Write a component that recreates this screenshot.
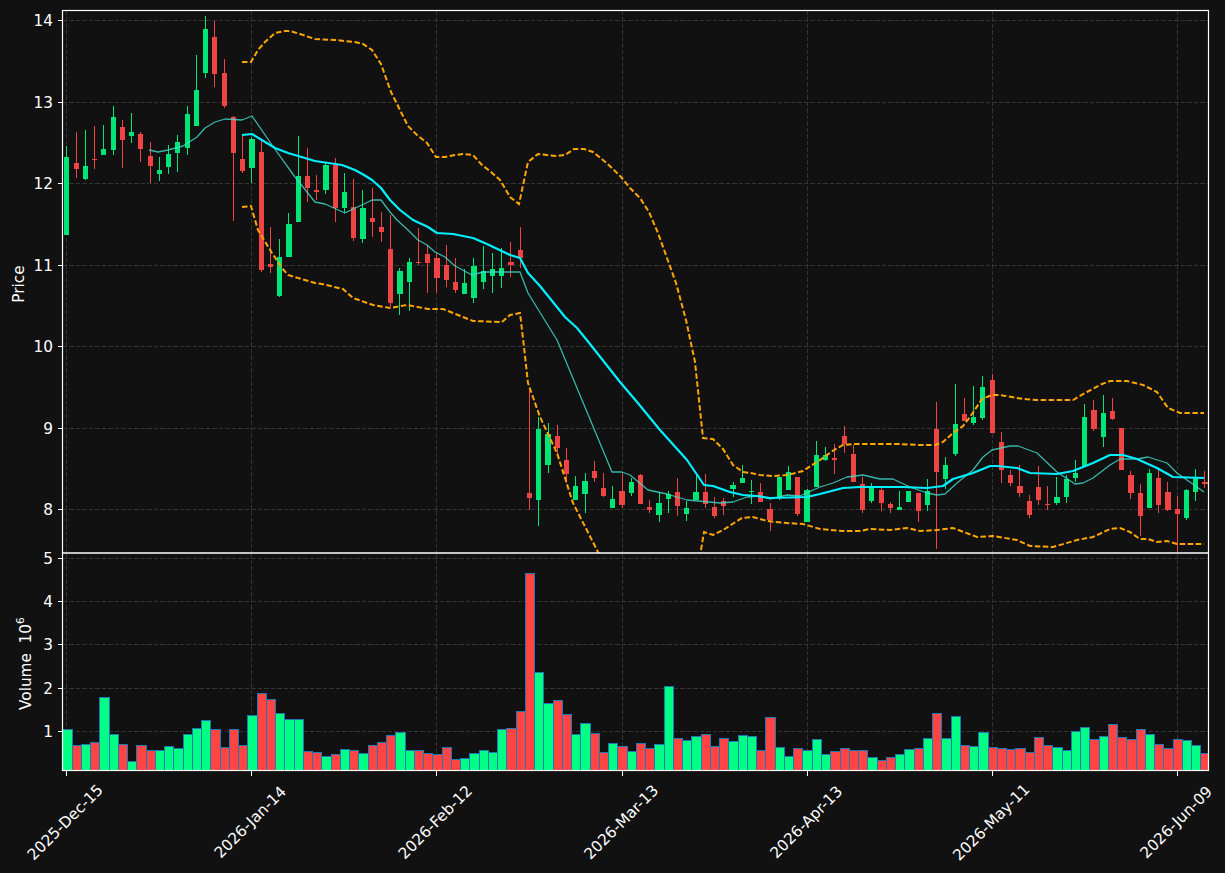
// OHLC chart, values are read off the screen in px
type Candle = [number, number, number, number, number]; // wick top, body top, body bottom, wick bottom, up

const candles: Candle[] = [
  [146, 157, 235, 235, 1], [132, 163, 169, 178, 0], [130, 166, 179, 180, 1], [126, 159, 160, 169, 0],
  [125, 149, 155, 155, 1], [106, 117, 150, 155, 1], [120, 127, 140, 168, 0], [113, 132, 136, 143, 1],
  [132, 134, 149, 162, 0], [142, 156, 166, 183, 0], [157, 170, 174, 181, 1], [145, 154, 167, 174, 1],
  [135, 142, 153, 172, 1], [106, 114, 148, 155, 1], [55, 90, 126, 126, 1], [16, 29, 73, 78, 1],
  [21, 37, 74, 87, 0], [59, 73, 106, 108, 0], [116, 117, 153, 221, 0], [135, 159, 171, 173, 0],
  [137, 139, 168, 183, 1], [140, 152, 270, 272, 0], [227, 264, 267, 273, 0], [239, 257, 296, 297, 1],
  [213, 224, 257, 257, 1], [136, 176, 222, 222, 1], [148, 176, 188, 202, 0], [175, 190, 192, 200, 0],
  [163, 165, 190, 194, 1], [158, 165, 208, 222, 0], [173, 192, 208, 213, 1], [179, 207, 238, 241, 0],
  [190, 208, 239, 243, 1], [188, 218, 222, 237, 0], [212, 227, 232, 242, 0], [215, 249, 303, 307, 0],
  [268, 271, 294, 315, 1], [258, 262, 282, 311, 1], [228, 262, 263, 265, 0], [245, 254, 263, 293, 0],
  [253, 258, 278, 293, 0], [245, 265, 280, 287, 0], [258, 282, 290, 293, 0], [269, 283, 294, 294, 1],
  [258, 266, 298, 303, 1], [246, 271, 282, 289, 1], [253, 269, 276, 293, 1], [248, 268, 276, 288, 1],
  [242, 262, 265, 277, 0], [227, 250, 258, 268, 0], [390, 493, 498, 510, 0], [417, 429, 500, 526, 1],
  [423, 434, 465, 473, 1], [425, 436, 448, 455, 0], [448, 460, 474, 483, 0], [476, 486, 500, 500, 1],
  [473, 481, 494, 513, 1], [461, 471, 478, 482, 0], [473, 488, 496, 497, 0], [486, 499, 508, 508, 1],
  [473, 491, 505, 508, 0], [478, 482, 493, 496, 1], [474, 475, 504, 504, 0], [500, 507, 510, 513, 0],
  [492, 503, 515, 522, 1], [491, 494, 499, 513, 1], [478, 492, 506, 516, 0], [501, 508, 514, 521, 1],
  [475, 492, 500, 500, 1], [474, 492, 504, 508, 0], [497, 507, 516, 518, 0], [498, 501, 506, 515, 0],
  [482, 485, 489, 497, 1], [465, 478, 483, 483, 1], [480, 491, 492, 504, 1], [483, 492, 502, 502, 0],
  [503, 509, 520, 531, 0], [477, 477, 497, 500, 1], [466, 472, 490, 490, 1], [477, 477, 514, 516, 0],
  [489, 490, 522, 522, 1], [441, 455, 487, 487, 1], [447, 455, 460, 461, 1], [444, 458, 460, 474, 0],
  [426, 436, 444, 453, 0], [445, 454, 482, 482, 0], [477, 484, 510, 513, 0], [483, 486, 501, 503, 1],
  [486, 490, 503, 511, 0], [502, 504, 508, 513, 0], [491, 507, 510, 510, 1], [491, 491, 502, 502, 1],
  [493, 493, 511, 522, 0], [479, 491, 505, 511, 1], [402, 429, 472, 549, 0], [457, 465, 479, 489, 1],
  [384, 424, 454, 456, 1], [398, 414, 421, 421, 0], [386, 417, 423, 425, 1], [376, 387, 418, 420, 1],
  [374, 380, 433, 433, 0], [432, 442, 470, 483, 0], [470, 475, 483, 486, 0], [465, 486, 493, 497, 0],
  [495, 501, 515, 518, 0], [466, 487, 500, 505, 0], [486, 504, 505, 510, 0], [477, 497, 503, 505, 1],
  [475, 479, 497, 503, 1], [460, 473, 478, 482, 1], [404, 417, 466, 467, 1], [400, 410, 429, 431, 0],
  [395, 413, 437, 447, 1], [398, 411, 419, 420, 0], [428, 428, 470, 470, 0], [471, 475, 493, 499, 0],
  [484, 493, 516, 536, 0], [469, 473, 508, 508, 1], [469, 478, 505, 513, 0], [482, 492, 510, 511, 0],
  [496, 509, 514, 552, 0], [489, 490, 518, 520, 1], [469, 477, 492, 501, 1], [471, 482, 484, 488, 0],
];

// volume bar tops, px
const volumeTops = [
  729, 745, 744, 742, 697, 734, 744, 761, 745, 750, 750, 746, 748, 734, 728, 720, 729, 747, 729, 745,
  715, 693, 699, 713, 719, 719, 751, 752, 756, 754, 749, 750, 753, 745, 742, 735, 732, 750, 750, 753,
  754, 747, 759, 758, 753, 750, 752, 729, 728, 711, 573, 672, 703, 700, 714, 734, 723, 733, 752, 743,
  746, 751, 743, 748, 744, 686, 738, 740, 736, 734, 746, 738, 741, 735, 736, 750, 717, 747, 756, 748,
  750, 739, 754, 751, 748, 750, 750, 757, 760, 757, 754, 749, 748, 738, 713, 738, 716, 745, 746, 732,
  747, 748, 749, 748, 752, 737, 745, 747, 750, 731, 727, 739, 736, 724, 737, 739, 729, 734, 744, 748,
  739, 740, 745, 753,
];

const upper = "242,62 251,62 258,50 265,42 275,33 285,31 290,31 300,34 315,39 335,40 355,42 363,44 372,50 381,64 391,92 400,110 408,126 417,135 427,143 436,157 445,157 455,155 464,154 473,155 482,165 491,172 500,180 510,197 519,204 528,162 538,154 547,155 556,156 565,155 574,149 584,149 593,152 603,160 612,168 621,177 630,188 640,198 649,212 658,233 667,258 676,283 686,320 695,362 703,438 713,439 723,449 733,465 743,472 751,473 760,475 773,476 788,475 803,471 820,460 834,450 843,445 853,444 880,444 899,444 920,445 935,445 943,442 953,433 963,426 970,417 982,399 992,395 1000,395 1023,399 1037,400 1073,400 1087,392 1102,384 1110,381 1127,381 1143,385 1157,392 1168,408 1180,413 1204,413";
const lower = "242,207 251,206 258,230 272,253 282,268 288,275 315,283 322,284 343,289 353,298 373,305 390,308 407,305 428,309 443,309 473,321 502,322 510,315 520,313 524,347 528,383 540,417 557,453 573,503 598,552 620,590 650,620 680,610 701,550 704,532 713,535 723,530 742,518 753,517 767,521 787,523 803,524 820,529 843,531 860,531 870,529 890,530 907,528 920,531 937,530 953,528 977,537 993,536 1017,540 1030,546 1053,547 1077,540 1093,537 1110,529 1120,528 1130,532 1140,539 1148,539 1157,542 1167,541 1177,544 1204,544";
const ma = "242,135 252,134 275,148 288,153 315,161 342,165 355,170 364,175 372,180 381,188 390,200 400,210 413,220 428,227 437,233 453,234 473,238 487,244 510,255 520,258 528,273 540,286 565,317 577,328 590,344 620,382 637,402 660,430 687,460 704,485 713,486 730,492 743,495 757,496 770,498 807,497 820,494 843,488 860,487 903,487 927,488 943,486 953,479 973,473 990,466 997,466 1017,468 1030,473 1057,474 1073,471 1093,463 1110,455 1123,455 1137,459 1157,468 1173,477 1204,478";
const maFast = "149,150 158,152 168,150 183,146 197,137 205,128 215,122 225,119 242,120 252,116 272,145 295,177 315,202 325,204 345,213 355,208 364,204 372,200 381,200 390,212 397,220 408,230 418,240 427,245 435,252 445,257 455,266 472,275 483,272 520,272 528,293 557,340 612,472 622,472 630,475 648,490 667,494 687,500 720,503 733,502 747,497 760,496 770,499 787,495 800,496 820,487 833,483 847,477 863,475 880,479 893,479 910,487 927,493 937,495 945,494 957,483 973,470 983,457 992,450 1010,446 1018,446 1037,453 1057,472 1075,484 1083,483 1093,478 1110,465 1120,459 1137,459 1148,457 1167,463 1177,473 1204,492";

const STEP = 9.253;
const barCenter = (i: number) => 66.85 + i * STEP;

const dates = [
  { label: "2025-Dec-15", i: 0 },
  { label: "2026-Jan-14", i: 20 },
  { label: "2026-Feb-12", i: 40 },
  { label: "2026-Mar-13", i: 60 },
  { label: "2026-Apr-13", i: 80 },
  { label: "2026-May-11", i: 100 },
  { label: "2026-Jun-09", i: 120 },
];
const priceTicks = [
  { label: "14", y: 20.5 },
  { label: "13", y: 102.5 },
  { label: "12", y: 183.5 },
  { label: "11", y: 265.5 },
  { label: "10", y: 346.5 },
  { label: "9", y: 428.5 },
  { label: "8", y: 509.5 },
];
const volumeTicks = [
  { label: "5", y: 558.5 },
  { label: "4", y: 601.5 },
  { label: "3", y: 644.5 },
  { label: "2", y: 688.5 },
  { label: "1", y: 731.5 },
];

const L = 62.5;
const R = 1208.5;
const TOP = 10.5;
const MID = 553;
const BOTTOM = 770.5;

function Candles() {
  return (
    <g shapeRendering="crispEdges">
      {candles.map(([wickTop, bodyTop, bodyBottom, wickBottom, up], i) => {
        const left = Math.round(64.25 + i * STEP);
        const right = Math.round(69.45 + i * STEP);
        const fill = up ? "fill-[#00e676]" : "fill-[#ef4444]";
        return (
          <g key={i} className={fill}>
            <rect x={Math.floor(barCenter(i))} y={wickTop} width={1} height={wickBottom - wickTop} />
            <rect x={left} y={bodyTop} width={right - left} height={bodyBottom - bodyTop} />
          </g>
        );
      })}
    </g>
  );
}

function VolumeBars() {
  const barLeft = (i: number) => Math.round(barCenter(i) - 4.6);
  return (
    <g shapeRendering="crispEdges" className="stroke-[#1f77b4]">
      {volumeTops.map((top, i) => (
        <rect
          key={i}
          x={barLeft(i) + 0.5}
          y={top + 0.5}
          width={barLeft(i + 1) - barLeft(i)}
          height={BOTTOM - top + 2}
          className={candles[i][4] ? "fill-[#00ff85]" : "fill-[#ff4444]"}
        />
      ))}
    </g>
  );
}

export default function App() {
  return (
    <div className="w-[1225px] h-[873px] bg-[#111111] overflow-hidden">
      <svg
        width={1225}
        height={873}
        viewBox="0 0 1225 873"
        className="block font-['DejaVu_Sans',sans-serif] text-[15.3px]"
      >
        <defs>
          <clipPath id="price-area">
            <rect x={L} y={TOP} width={R - L} height={MID - TOP} />
          </clipPath>
          <clipPath id="volume-area">
            <rect x={L} y={MID} width={R - L} height={BOTTOM - MID} />
          </clipPath>
        </defs>

        {/* grid */}
        <g className="stroke-[#333333]" strokeDasharray="4.5 2" shapeRendering="crispEdges">
          {[...priceTicks, ...volumeTicks].map((t) => (
            <line key={t.y} x1={L} x2={R} y1={t.y} y2={t.y} />
          ))}
          {dates.map((d) => {
            const x = Math.floor(barCenter(d.i)) + 0.5;
            return (
              <g key={d.label}>
                <line x1={x} x2={x} y1={TOP} y2={MID} />
                <line x1={x} x2={x} y1={MID} y2={BOTTOM} />
              </g>
            );
          })}
        </g>

        <g clipPath="url(#volume-area)">
          <VolumeBars />
        </g>

        <g clipPath="url(#price-area)">
          <Candles />
          <polyline points={maFast} fill="none" className="stroke-[#40e0d0]" strokeWidth={1.3} strokeOpacity={0.8} strokeLinejoin="round" />
          <polyline points={ma} fill="none" className="stroke-[#00f0ff]" strokeWidth={2.2} strokeLinejoin="round" />
          <polyline points={upper} fill="none" className="stroke-[#ffa500]" strokeWidth={2} strokeDasharray="5.5 2.5" />
          <polyline points={lower} fill="none" className="stroke-[#ffa500]" strokeWidth={2} strokeDasharray="5.5 2.5" />
        </g>

        {/* spines */}
        <g className="stroke-white" fill="none" strokeWidth={1.2}>
          <rect x={L} y={TOP} width={R - L} height={BOTTOM - TOP} />
          <line x1={L} x2={R} y1={MID} y2={MID} strokeWidth={1.5} />
        </g>

        {/* ticks and labels */}
        <g className="fill-white">
          {[...priceTicks, ...volumeTicks].map((t) => (
            <g key={t.y}>
              <line x1={57.5} x2={L} y1={t.y} y2={t.y} className="stroke-white" shapeRendering="crispEdges" />
              <text x={53} y={t.y + 5.5} textAnchor="end">{t.label}</text>
            </g>
          ))}
          {dates.map((d) => {
            const x = Math.floor(barCenter(d.i)) + 0.5;
            return (
              <g key={d.label}>
                <line x1={x} x2={x} y1={BOTTOM} y2={775.5} className="stroke-white" shapeRendering="crispEdges" />
                <text
                  x={x - 1.5}
                  y={827.5}
                  textAnchor="middle"
                  transform={`rotate(-45 ${x - 1.5} 822)`}
                >
                  {d.label}
                </text>
              </g>
            );
          })}
          <text x={24} y={284} textAnchor="middle" transform="rotate(-90 24 284)">Price</text>
          <text x={31} y={710} transform="rotate(-90 31 710)">
            {"Volume\u00a0\u00a010"}
            <tspan dy={-7} className="text-[10.7px]">6</tspan>
          </text>
        </g>
      </svg>
    </div>
  );
}
